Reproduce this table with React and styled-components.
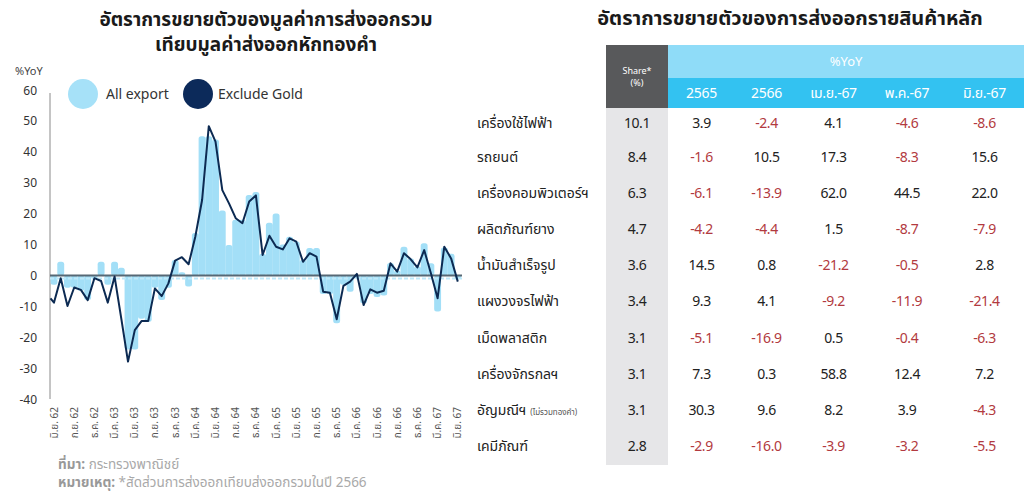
import React from "react";
import styled, { createGlobalStyle } from "styled-components";

const Global = createGlobalStyle`
  html, body { margin: 0; padding: 0; background: #fff; }
  body { font-family: "Noto Sans Thai", "Noto Sans", "DejaVu Sans", sans-serif; color: #222; }
`;

const Page = styled.div`
  display: flex;
  width: 1024px;
  height: 502px;
  overflow: hidden;
`;

const LeftCol = styled.div`
  width: 470px;
  display: flex;
  flex-direction: column;
`;

const RightCol = styled.div`
  width: 554px;
  display: flex;
  flex-direction: column;
`;

const Title = styled.h1`
  margin: 0;
  padding: ${(p) => p.$pad};
  height: ${(p) => p.$h};
  box-sizing: border-box;
  font-size: ${(p) => p.$size || "19px"};
  line-height: 25px;
  font-weight: 700;
  color: #1a1a1a;
  text-align: center;
  white-space: nowrap;
`;

const Chart = styled.svg`
  display: block;
  width: 470px;
  height: 390px;
`;

const Notes = styled.div`
  margin-top: 8px;
  padding-left: 58px;
  font-size: 13.5px;
  line-height: 18px;
  color: #a9a9a9;
`;

const NoteLabel = styled.b`
  font-weight: 700;
  color: #999;
`;

const Table = styled.div`
  margin-top: 13px;
  display: grid;
  grid-template-columns: 136px 62px 67px 63px 71px 76px 79px;
  grid-template-rows: 33px 30px 31px repeat(9, 36.2px);
`;

const Blank = styled.div`
  grid-row: 1 / span 2;
  grid-column: 1;
`;

const ShareHead = styled.div`
  grid-row: 1 / span 2;
  grid-column: 2;
  background: #58595b;
  color: #fff;
  font-size: 9px;
  line-height: 12px;
  display: flex;
  flex-direction: column;
  align-items: center;
  justify-content: center;
  padding-top: 1px;
`;

const YoYHead = styled.div`
  grid-row: 1;
  grid-column: 3 / span 5;
  background: #8fdcf8;
  color: #fff;
  font-size: 13px;
  display: flex;
  align-items: center;
  justify-content: center;
`;

const PeriodHead = styled.div`
  grid-row: 2;
  background: #33c2f1;
  color: #fff;
  font-size: 14px;
  display: flex;
  align-items: center;
  justify-content: center;
  letter-spacing: -0.3px;
`;

const Label = styled.div`
  display: flex;
  align-items: center;
  padding-left: 7px;
  font-size: 14px;
  color: #222;
  white-space: nowrap;
`;

const Small = styled.span`
  font-size: 8px;
  color: #555;
  margin-left: 4px;
  padding-top: 5px;
`;

const Cell = styled.div`
  display: flex;
  align-items: center;
  justify-content: center;
  font-size: 14px;
  letter-spacing: -0.4px;
  color: ${(p) => (p.$neg ? "#b23a40" : "#222")};
  background: ${(p) => (p.$share ? "#e6e6e8" : "transparent")};
`;

const line = [
  -8.8, -0.9, -9.9, -3.9, -4.7, -8.0, -0.9, -1.8, -8.8, -0.4, -14, -27.9, -17.7, -14.8, -14.8, -4.2,
  -6.7, -2.6, 4.8, 5.9, 3.6, 12.5, 24.4, 48.3, 43.3, 27.6, 23.3, 18.5, 16.9, 23.9, 25.9, 6.6, 12.8,
  9.3, 8.4, 12.0, 10.9, 4.4, 7.2, 6.1, -5.3, -5.6, -14.2, -3.4, -2.0, 0.5, -9.6, -4.5, -5.6, -5.0,
  3.9, 1.2, 7.2, 5.2, 2.6, 8.2, 0.7, -7.4, 9.3, 5.5, -2.0,
];

const bars = [
  -3, 4.4, -4, -4, -5, -8, -1, 4.4, -3, 4.4, 2.5, -24, -24, -14, -15, -4, -8, -4, 5, 1, -3.6, 13.7,
  45, 45, 44, 21, 9.8, 18, 18, 26, 27, 7, 17, 20, 10, 12.5, 11, 5, 8.9, 8.9, -6, -6, -15.5, -3, -5.3,
  -1, -9, -6, -7, -6.5, 4, 1.5, 9.3, 5.5, 3, 10.4, 3.9, -11.7, 9, 7, -1,
];

const X0 = 54;
const DX = 6.73;
const Y0 = 275.4;
const K = 3.09;
const xs = (i) => X0 + DX * i;
const ys = (v) => Y0 - v * K;

const xLabels = [
  "มิ.ย. 62", "ก.ย. 62", "ธ.ค. 62", "มี.ค. 63", "มิ.ย. 63", "ก.ย. 63", "ธ.ค. 63", "มี.ค. 64",
  "มิ.ย. 64", "ก.ย. 64", "ธ.ค. 64", "มี.ค. 65", "มิ.ย. 65", "ก.ย. 65", "ธ.ค. 65", "มี.ค. 66",
  "มิ.ย. 66", "ก.ย. 66", "ธ.ค. 66", "มี.ค. 67", "มิ.ย. 67",
];

const ticks = [60, 50, 40, 30, 20, 10, 0, -10, -20, -30, -40];

function GrowthChart() {
  const path =
    "M50.5,298.3 " + line.map((v, i) => `L${xs(i).toFixed(1)},${ys(v).toFixed(1)}`).join(" ");
  return (
    <Chart viewBox="0 58 470 390">
      <text x="15" y="75" fontSize="11" fill="#444" fontFamily="Noto Sans, sans-serif">%YoY</text>
      {ticks.map((t) => (
        <text key={t} x="37" y={ys(t) + 4.5} fontSize="12" fill="#333" textAnchor="end" fontFamily="Noto Sans, sans-serif">
          {t}
        </text>
      ))}
      <line x1="50" y1="93" x2="50" y2="399" stroke="#8a8a8a" strokeWidth="1" />
      {bars.map((v, i) => {
        const y = Math.min(ys(v), Y0);
        const h = Math.max(Math.abs(v * K), 2);
        return <rect key={i} x={xs(i) - 3.45} y={y} width={6.9} height={h} rx="2.5" fill="#a3dff7" />;
      })}
      <line x1="50" y1="278.5" x2="462" y2="278.5" stroke="#bfe9fa" strokeWidth="2" strokeDasharray="4 2" />
      <line x1="50" y1={Y0} x2="462" y2={Y0} stroke="#566875" strokeWidth="2" />
      <path d={path} fill="none" stroke="#0c2a52" strokeWidth="2" strokeLinejoin="round" />
      <circle cx="83" cy="94" r="15" fill="#a6e1f8" />
      <text x="106" y="99" fontSize="14" fill="#333" fontFamily="Noto Sans, sans-serif">All export</text>
      <circle cx="198" cy="94" r="15" fill="#0c2a5a" />
      <text x="218" y="99" fontSize="14" fill="#333" fontFamily="Noto Sans, sans-serif">Exclude Gold</text>
      {xLabels.map((l, k) => {
        const x = X0 + 20.19 * k + 3.5;
        return (
          <text key={l} x={x} y="407" fontSize="10" fill="#555" textAnchor="end" transform={`rotate(-90 ${x} 407)`}>
            {l}
          </text>
        );
      })}
    </Chart>
  );
}

const rows = [
  ["เครื่องใช้ไฟฟ้า", "10.1", "3.9", "-2.4", "4.1", "-4.6", "-8.6"],
  ["รถยนต์", "8.4", "-1.6", "10.5", "17.3", "-8.3", "15.6"],
  ["เครื่องคอมพิวเตอร์ฯ", "6.3", "-6.1", "-13.9", "62.0", "44.5", "22.0"],
  ["ผลิตภัณฑ์ยาง", "4.7", "-4.2", "-4.4", "1.5", "-8.7", "-7.9"],
  ["น้ำมันสำเร็จรูป", "3.6", "14.5", "0.8", "-21.2", "-0.5", "2.8"],
  ["แผงวงจรไฟฟ้า", "3.4", "9.3", "4.1", "-9.2", "-11.9", "-21.4"],
  ["เม็ดพลาสติก", "3.1", "-5.1", "-16.9", "0.5", "-0.4", "-6.3"],
  ["เครื่องจักรกลฯ", "3.1", "7.3", "0.3", "58.8", "12.4", "7.2"],
  ["อัญมณีฯ", "3.1", "30.3", "9.6", "8.2", "3.9", "-4.3", "(ไม่รวมทองคำ)"],
  ["เคมีภัณฑ์", "2.8", "-2.9", "-16.0", "-3.9", "-3.2", "-5.5"],
];

const periods = ["2565", "2566", "เม.ย.-67", "พ.ค.-67", "มิ.ย.-67"];

export default function App() {
  return (
    <Page>
      <Global />
      <LeftCol>
        <Title $pad="8px 0 0 62px" $h="58px">
          อัตราการขยายตัวของมูลค่าการส่งออกรวม
          <br />
          เทียบมูลค่าส่งออกหักทองคำ
        </Title>
        <GrowthChart />
        <Notes>
          <div>
            <NoteLabel>ที่มา:</NoteLabel> กระทรวงพาณิชย์
          </div>
          <div>
            <NoteLabel>หมายเหตุ:</NoteLabel> *สัดส่วนการส่งออกเทียบส่งออกรวมในปี 2566
          </div>
        </Notes>
      </LeftCol>
      <RightCol>
        <Title $pad="7px 0 0 86px" $h="32px" $size="20px">
          อัตราการขยายตัวของการส่งออกรายสินค้าหลัก
        </Title>
        <Table>
          <Blank />
          <ShareHead>
            <span>Share*</span>
            <span>(%)</span>
          </ShareHead>
          <YoYHead>%YoY</YoYHead>
          {periods.map((p) => (
            <PeriodHead key={p}>{p}</PeriodHead>
          ))}
          {rows.map((r) => (
            <React.Fragment key={r[0]}>
              <Label>
                {r[0]}
                {r[7] && <Small>{r[7]}</Small>}
              </Label>
              {r.slice(1, 7).map((v, j) => (
                <Cell key={j} $share={j === 0} $neg={j > 0 && v.startsWith("-")}>
                  {v}
                </Cell>
              ))}
            </React.Fragment>
          ))}
        </Table>
      </RightCol>
    </Page>
  );
}
